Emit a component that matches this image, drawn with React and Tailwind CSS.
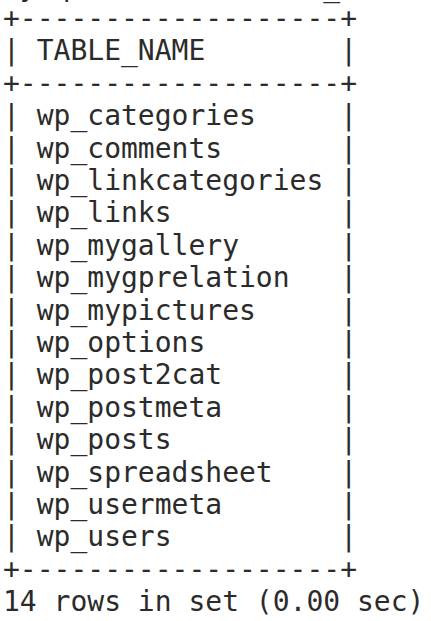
export default function App() {
  const names = [
    'wp_categories',
    'wp_comments',
    'wp_linkcategories',
    'wp_links',
    'wp_mygallery',
    'wp_mygprelation',
    'wp_mypictures',
    'wp_options',
    'wp_post2cat',
    'wp_postmeta',
    'wp_posts',
    'wp_spreadsheet',
    'wp_usermeta',
    'wp_users',
  ];
  const border = '+' + '-'.repeat(19) + '+';
  const row = (s) => '| ' + s.padEnd(17, ' ') + ' |';

  const lines = [
    'mysql> select TABLE_NAME',
    border,
    row('TABLE_NAME'),
    border,
    ...names.map(row),
    border,
    '14 rows in set (0.00 sec)',
  ];

  return (
    <div className="w-[431px] h-[621px] overflow-hidden bg-white">
      <pre className="mt-[-29.5px] pl-[3px] font-['DejaVu_Sans_Mono',monospace] text-[28px] leading-[32.4px] text-[#2b2b2b] whitespace-pre">
        {lines.join('\n')}
      </pre>
    </div>
  );
}
